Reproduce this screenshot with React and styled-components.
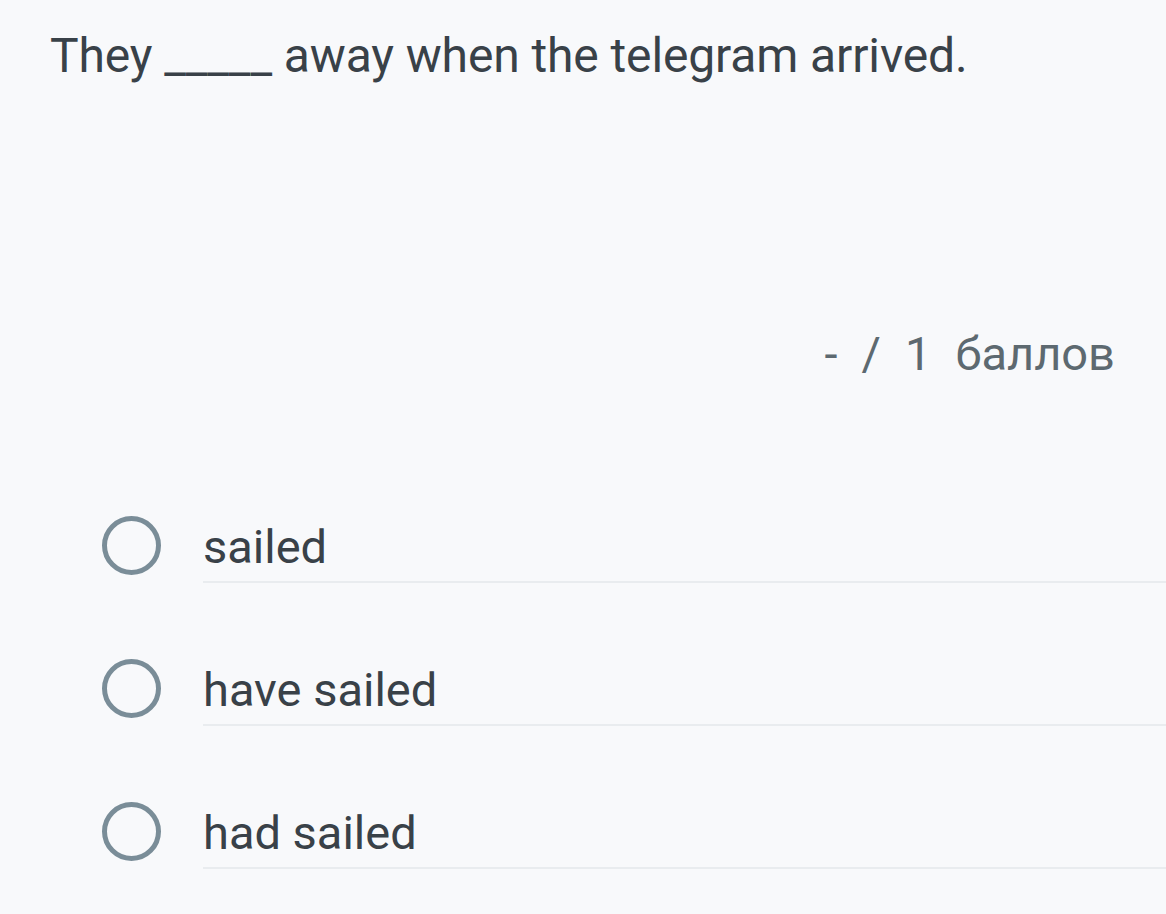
import React from "react";
import styled, { createGlobalStyle } from "styled-components";

const Global = createGlobalStyle`
  html, body {
    margin: 0;
    padding: 0;
    background: #f8f9fb;
  }
  body {
    font-family: Roboto, "Noto Sans", "Liberation Sans", sans-serif;
  }
`;

const Page = styled.main`
  display: flex;
  flex-direction: column;
  min-height: 914px;
  box-sizing: border-box;
  padding-top: 28px;
  background: #f8f9fb;
`;

const Question = styled.h1`
  margin: 0;
  padding-left: 50px;
  font-size: 48px;
  letter-spacing: -0.12px;
  line-height: 56px;
  font-weight: 400;
  color: #394148;
`;

const Score = styled.div`
  display: flex;
  justify-content: flex-end;
  align-items: baseline;
  gap: 24px;
  margin-top: 242px;
  padding-right: 51px;
  font-size: 47px;
  line-height: 56px;
  color: #5d6970;
`;

const Options = styled.div`
  display: flex;
  flex-direction: column;
  margin-top: 58px;
`;

const Option = styled.label`
  display: flex;
  align-items: flex-start;
  padding-left: 102px;
  cursor: pointer;
`;

const Radio = styled.span`
  flex: none;
  width: 59px;
  height: 59px;
  box-sizing: border-box;
  margin-top: 76px;
  margin-right: 42px;
  border: 5.5px solid #7a8d98;
  border-radius: 50%;
`;

const Label = styled.span`
  flex: 1;
  padding-top: 80px;
  padding-bottom: 7px;
  border-bottom: 2px solid #e9ecef;
  font-size: 47px;
  line-height: 54px;
  color: #394148;
`;

const options = ["sailed", "have sailed", "had sailed"];

export default function App() {
  return (
    <>
      <Global />
      <Page>
        <Question>They _____ away when the telegram arrived.</Question>
        <Score>
          <span>-</span>
          <span>/</span>
          <span>1</span>
          <span>баллов</span>
        </Score>
        <Options>
          {options.map((o) => (
            <Option key={o}>
              <Radio />
              <Label>{o}</Label>
            </Option>
          ))}
        </Options>
      </Page>
    </>
  );
}
